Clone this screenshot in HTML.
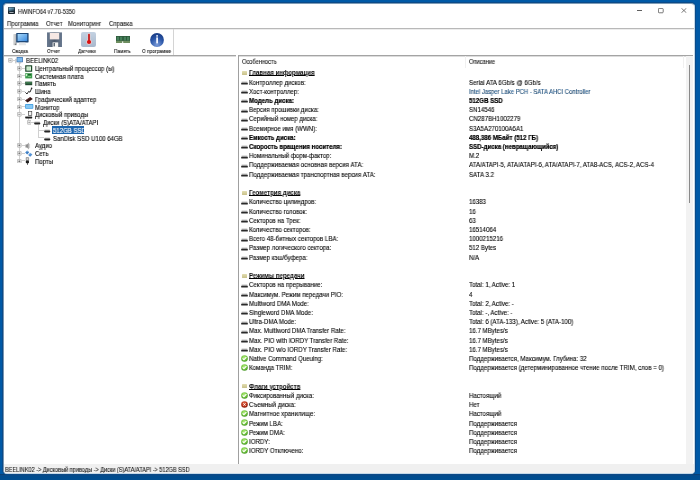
<!DOCTYPE html>
<html><head><meta charset="utf-8">
<style>
*{margin:0;padding:0;box-sizing:border-box}
html,body{width:700px;height:480px;overflow:hidden}
body{background:#0059a6;font-family:"Liberation Sans",sans-serif;color:#1a1a1a;position:relative}
.abs{position:absolute}
.t,.lr,.tr{will-change:transform}
.tr,.lr{-webkit-text-stroke:0.1px #000}
.t{-webkit-text-stroke:0.1px #111}
#shadow{position:absolute;left:2px;top:2px;width:694px;height:473px;border-radius:5px;background:#0b4a88}
#win{position:absolute;left:3px;top:3px;width:692px;height:471px;background:#fff;border:1px solid #c4d8e8;border-left-color:#7896b2;border-top-color:#7e9cb6;border-radius:4px;overflow:hidden}
.t{position:absolute;white-space:nowrap}
#title{left:14px;top:3.6px;font-size:6.3px;line-height:8px;color:#1a1a1a;transform:scaleX(.87);transform-origin:0 50%}
.menu{top:16.2px;font-size:6.9px;line-height:8px;color:#1a1a1a;transform:scaleX(.87);transform-origin:0 50%}
.tb{font-size:5.8px;line-height:8px;color:#1a1a1a;top:43.4px;transform:scaleX(.82);transform-origin:0 50%}
#tree{position:absolute;left:0;top:51px;width:231.5px;height:409px;border-top:1px solid #a4a4a4;box-shadow:inset 0 1px 0 #dcdcdc}
#list{position:absolute;left:234px;top:51px;width:455px;height:409px;border-top:1px solid #a4a4a4;border-left:1px solid #a0a0a0;box-shadow:inset 0 1px 0 #dcdcdc}
#status{position:absolute;left:0;top:460px;width:690px;height:9px;background:#f0f0f0}
.tr{position:absolute;height:7.73px;line-height:7.73px;font-size:6.7px;white-space:nowrap;color:#000;transform:scaleX(.9);transform-origin:0 50%}
.lr{position:absolute;height:9.2px;line-height:9.2px;font-size:6.8px;white-space:nowrap;color:#000;transform:scaleX(.9);transform-origin:0 50%}
.b{font-weight:bold;color:#000;-webkit-text-stroke:0.22px #000}
.hd{font-size:6.3px;line-height:8px;color:#222;transform:scaleX(.9);transform-origin:0 50%}
.sec{-webkit-text-stroke:0.03px #000;font-weight:bold;text-decoration:underline;text-underline-offset:0px;text-decoration-thickness:1px;color:#111}
.link{color:#1e5e98;transform:scaleX(.87)}
.ico-drv{width:6.5px;height:2.2px;background:#2a2a2a;border-top:1px solid #9a9a9a}
.exp{width:4.6px;height:4.6px;border:1px solid #c4c4c4;border-radius:1px;background:#fafafa}
.exp i{position:absolute;left:0.6px;top:1.3px;height:0;border-top:1px solid #555;width:1.6px}
.exp b{position:absolute;left:1.1px;top:0.6px;width:0;height:1.6px;border-left:1px solid #555}
.tl{background:#d0d0d0}
</style></head><body>
<div class="abs" style="left:0;top:474px;width:700px;height:6px;background:linear-gradient(#0b3a6a,#0a4886 1.2px,#004c8e 2.5px,#004d90)"></div>
<div id="shadow"></div>
<div id="win">
  <svg class="abs" style="left:4px;top:2.9px" width="7" height="7" viewBox="0 0 70 70"><defs><linearGradient id="ti" x1="0" y1="0" x2=".6" y2="1"><stop offset="0" stop-color="#9cc8dc"/><stop offset=".45" stop-color="#5a8aa4"/><stop offset="1" stop-color="#1e3444"/></linearGradient></defs><rect x="0" y="0" width="70" height="70" rx="8" fill="#16212a"/><rect x="6" y="6" width="58" height="40" rx="3" fill="url(#ti)"/><rect x="14" y="52" width="42" height="8" fill="#c8d0d6"/></svg>
  <div class="t" id="title">HWiNFO64 v7.70-5350</div>
  <div class="abs" style="left:633px;top:6.2px;width:4.8px;height:1px;background:#606060"></div>
  <svg class="abs" style="left:654.4px;top:4.4px" width="5.6" height="5.2" viewBox="0 0 56 52"><rect x="4" y="4" width="48" height="44" rx="8" fill="none" stroke="#555" stroke-width="8"/></svg>
  <svg class="abs" style="left:676.8px;top:4.4px" width="5.8" height="5" viewBox="0 0 58 50"><path d="M4 2L54 48M54 2L4 48" stroke="#4a4a4a" stroke-width="7"/></svg>
  <div class="t menu" style="left:3.2px">Программа</div>
  <div class="t menu" style="left:41.8px">Отчет</div>
  <div class="t menu" style="left:63.6px">Мониторинг</div>
  <div class="t menu" style="left:104.7px">Справка</div>
  <div class="abs" style="left:0;top:24px;width:692px;height:1px;background:#b8b8b8"></div><div class="abs" style="left:0;top:25px;width:692px;height:1px;background:#ececec"></div>
  <div class="abs" style="left:169px;top:25px;width:1px;height:26px;background:#d4d4d4"></div>
  <svg class="abs" style="left:9px;top:28.5px" width="16" height="13" viewBox="0 0 160 130"><defs><linearGradient id="scr" x1="0" y1="0" x2="1" y2="1"><stop offset="0" stop-color="#a8d8f8"/><stop offset="1" stop-color="#3a8ae0"/></linearGradient><linearGradient id="tw" x1="0" x2="1"><stop offset="0" stop-color="#e8e8e8"/><stop offset="1" stop-color="#a4a8ac"/></linearGradient></defs>
   <rect x="0" y="10" width="38" height="112" rx="4" fill="url(#tw)"/><rect x="18" y="108" width="12" height="8" fill="#555"/>
   <rect x="32" y="0" width="124" height="94" rx="6" fill="#1e4878"/><rect x="46" y="10" width="96" height="70" fill="url(#scr)"/>
   <path d="M64 94H124L132 122H56Z" fill="#e4e6e8"/></svg>
  <svg class="abs" style="left:43px;top:27.6px" width="15" height="15" viewBox="0 0 150 150"><defs><linearGradient id="fl" x1="0" x2="1"><stop offset="0" stop-color="#6a7a90"/><stop offset=".5" stop-color="#4a586c"/><stop offset="1" stop-color="#6a7a90"/></linearGradient></defs>
   <path d="M0 4H150V150H0Z" fill="url(#fl)"/><rect x="28" y="10" width="94" height="64" fill="#f6e8e4"/><rect x="56" y="104" width="56" height="46" fill="#f4f4f4"/><rect x="66" y="110" width="12" height="34" fill="#3a4656"/></svg>
  <div class="abs" style="left:77.2px;top:27.8px;width:14.8px;height:15.2px;border-radius:2px;background:linear-gradient(#c4d2e2,#a8b8cc)"></div>
  <svg class="abs" style="left:81.7px;top:29.2px" width="6" height="12" viewBox="0 0 60 120"><rect x="16" y="2" width="28" height="80" rx="14" fill="#f0d0d0"/><circle cx="30" cy="90" r="27" fill="#f0d0d0"/><rect x="21" y="8" width="18" height="76" rx="9" fill="#c41a1a"/><circle cx="30" cy="90" r="21" fill="#d81010"/></svg>
  <svg class="abs" style="left:112px;top:31.8px" width="14" height="7" viewBox="0 0 140 70"><rect x="0" y="0" width="140" height="70" fill="#2e5a3c"/><g fill="#46805a"><rect x="8" y="8" width="22" height="36"/><rect x="40" y="8" width="22" height="36"/><rect x="78" y="8" width="22" height="36"/><rect x="110" y="8" width="22" height="36"/></g><rect x="0" y="48" width="140" height="22" fill="#6e8e60"/><rect x="62" y="54" width="10" height="16" fill="#fff"/></svg>
  <svg class="abs" style="left:145.6px;top:28.8px" width="14" height="14" viewBox="0 0 140 140"><defs><radialGradient id="ig" cx=".5" cy=".85" r=".8"><stop offset="0" stop-color="#7a9ad8"/><stop offset=".6" stop-color="#2a56a8"/><stop offset="1" stop-color="#1a3e88"/></radialGradient></defs><circle cx="70" cy="70" r="69" fill="url(#ig)"/><rect x="62" y="22" width="18" height="14" fill="#f0f4ff"/><rect x="62" y="44" width="18" height="60" fill="#f0f4ff"/></svg>
  <div class="t tb" style="left:7.8px">Сводка</div>
  <div class="t tb" style="left:42.8px">Отчет</div>
  <div class="t tb" style="left:74.3px">Датчики</div>
  <div class="t tb" style="left:109.8px">Память</div>
  <div class="t tb" style="left:137.6px">О программе</div>
  <div id="tree"></div>
  <div id="list"></div>
  <div class="t hd" style="left:237.9px;top:54.3px">Особенность</div>
  <div class="t hd" style="left:465.1px;top:54.3px">Описание</div>
  <div class="abs" style="left:461px;top:52px;width:1px;height:12px;background:#f0f0f0"></div>
  <div class="abs" style="left:679px;top:52px;width:1px;height:12px;background:#f0f0f0"></div>
  <div class="abs" style="left:682px;top:52px;width:7px;height:408px;background:#f2f2f2"></div>
  <div class="abs" style="left:685px;top:60.5px;width:1px;height:138px;background:#8a8a8a"></div>
<div class="abs tl" style="left:15.00px;top:58.50px;width:1.00px;height:98.49px"></div>
<div class="abs tl" style="left:8.70px;top:56.00px;width:3.00px;height:1.00px"></div>
<div class="abs tl" style="left:17.50px;top:63.73px;width:3.00px;height:1.00px"></div>
<div class="abs tl" style="left:17.50px;top:71.46px;width:3.00px;height:1.00px"></div>
<div class="abs tl" style="left:17.50px;top:79.19px;width:3.00px;height:1.00px"></div>
<div class="abs tl" style="left:17.50px;top:86.92px;width:3.00px;height:1.00px"></div>
<div class="abs tl" style="left:17.50px;top:94.65px;width:3.00px;height:1.00px"></div>
<div class="abs tl" style="left:17.50px;top:102.38px;width:3.00px;height:1.00px"></div>
<div class="abs tl" style="left:17.50px;top:110.11px;width:3.00px;height:1.00px"></div>
<div class="abs tl" style="left:17.50px;top:141.03px;width:3.00px;height:1.00px"></div>
<div class="abs tl" style="left:17.50px;top:148.76px;width:3.00px;height:1.00px"></div>
<div class="abs tl" style="left:17.50px;top:156.49px;width:3.00px;height:1.00px"></div>
<div class="abs tl" style="left:24.30px;top:112.91px;width:1.00px;height:3.23px"></div>
<div class="abs tl" style="left:27.00px;top:117.84px;width:3.50px;height:1.00px"></div>
<div class="abs tl" style="left:34.30px;top:120.84px;width:1.00px;height:12.96px"></div>
<div class="abs tl" style="left:34.30px;top:125.57px;width:5.50px;height:1.00px"></div>
<div class="abs tl" style="left:34.30px;top:133.30px;width:5.50px;height:1.00px"></div>
<svg class="abs" style="left:4.10px;top:54.20px" width="4.6" height="4.6" viewBox="0 0 46 46"><rect x="4" y="4" width="38" height="38" rx="4" fill="#f4f4f4" stroke="#a8a8a8" stroke-width="7"/><path d="M13 23H33" stroke="#303030" stroke-width="5"/></svg>
<svg class="abs" style="left:11.20px;top:53.00px" width="9" height="8" viewBox="0 0 90 80"><rect x="0" y="18" width="16" height="46" fill="#c8ccd0"/><rect x="17" y="0" width="62" height="52" rx="4" fill="#2a5a9a"/><rect x="22" y="5" width="52" height="42" fill="#7ab8ec"/><rect x="35" y="52" width="26" height="12" fill="#b0b8c0"/></svg>
<div class="tr" style="left:21.50px;top:53.21px">BEELINK02</div>
<svg class="abs" style="left:13.10px;top:61.93px" width="4.6" height="4.6" viewBox="0 0 46 46"><rect x="4" y="4" width="38" height="38" rx="4" fill="#f4f4f4" stroke="#a8a8a8" stroke-width="7"/><path d="M13 23H33M23 13V33" stroke="#303030" stroke-width="5"/></svg>
<svg class="abs" style="left:20.50px;top:60.73px" width="8" height="7" viewBox="0 0 80 70"><rect x="2" y="2" width="70" height="66" rx="3" fill="#1e4a2a"/><rect x="14" y="14" width="46" height="42" fill="#e4f6e4"/><rect x="22" y="22" width="30" height="26" fill="#c4e8c4"/></svg>
<div class="tr" style="left:30.60px;top:60.94px">Центральный процессор (ы)</div>
<svg class="abs" style="left:13.10px;top:69.66px" width="4.6" height="4.6" viewBox="0 0 46 46"><rect x="4" y="4" width="38" height="38" rx="4" fill="#f4f4f4" stroke="#a8a8a8" stroke-width="7"/><path d="M13 23H33M23 13V33" stroke="#303030" stroke-width="5"/></svg>
<svg class="abs" style="left:20.50px;top:68.96px" width="8" height="6" viewBox="0 0 80 60"><rect x="2" y="2" width="70" height="52" fill="#3a9a4a"/><rect x="8" y="10" width="14" height="22" fill="#c8f0c8"/><rect x="30" y="10" width="30" height="12" fill="#1e5e2a"/><rect x="30" y="30" width="30" height="8" fill="#8ad08a"/></svg>
<div class="tr" style="left:30.60px;top:68.67px">Системная плата</div>
<svg class="abs" style="left:13.10px;top:77.39px" width="4.6" height="4.6" viewBox="0 0 46 46"><rect x="4" y="4" width="38" height="38" rx="4" fill="#f4f4f4" stroke="#a8a8a8" stroke-width="7"/><path d="M13 23H33M23 13V33" stroke="#303030" stroke-width="5"/></svg>
<svg class="abs" style="left:20.50px;top:77.19px" width="8" height="5" viewBox="0 0 80 50"><rect x="2" y="6" width="70" height="36" fill="#234a30"/><rect x="6" y="10" width="62" height="16" fill="#3e7a4e"/></svg>
<div class="tr" style="left:30.60px;top:76.40px">Память</div>
<svg class="abs" style="left:13.10px;top:85.12px" width="4.6" height="4.6" viewBox="0 0 46 46"><rect x="4" y="4" width="38" height="38" rx="4" fill="#f4f4f4" stroke="#a8a8a8" stroke-width="7"/><path d="M13 23H33M23 13V33" stroke="#303030" stroke-width="5"/></svg>
<svg class="abs" style="left:20.50px;top:83.42px" width="8" height="8" viewBox="0 0 80 80"><path d="M4 54L20 70L36 44L50 52L66 14" stroke="#2a2a2a" stroke-width="10" fill="none"/><circle cx="66" cy="14" r="8" fill="#2a2a2a"/></svg>
<div class="tr" style="left:30.60px;top:84.13px">Шина</div>
<svg class="abs" style="left:13.10px;top:92.85px" width="4.6" height="4.6" viewBox="0 0 46 46"><rect x="4" y="4" width="38" height="38" rx="4" fill="#f4f4f4" stroke="#a8a8a8" stroke-width="7"/><path d="M13 23H33M23 13V33" stroke="#303030" stroke-width="5"/></svg>
<svg class="abs" style="left:20.50px;top:91.65px" width="8" height="7" viewBox="0 0 80 70"><path d="M0 44L52 10L78 30L26 64Z" fill="#341414"/><path d="M10 44L52 17" stroke="#7a4444" stroke-width="6"/></svg>
<div class="tr" style="left:30.60px;top:91.86px">Графический адаптер</div>
<svg class="abs" style="left:13.10px;top:100.58px" width="4.6" height="4.6" viewBox="0 0 46 46"><rect x="4" y="4" width="38" height="38" rx="4" fill="#f4f4f4" stroke="#a8a8a8" stroke-width="7"/><path d="M13 23H33M23 13V33" stroke="#303030" stroke-width="5"/></svg>
<svg class="abs" style="left:20.50px;top:100.38px" width="9" height="5" viewBox="0 0 90 50"><rect x="1" y="1" width="82" height="46" rx="8" fill="#3a9ae0"/><rect x="8" y="7" width="68" height="34" rx="4" fill="#86c8f4"/></svg>
<div class="tr" style="left:30.60px;top:99.59px">Монитор</div>
<svg class="abs" style="left:13.10px;top:108.31px" width="4.6" height="4.6" viewBox="0 0 46 46"><rect x="4" y="4" width="38" height="38" rx="4" fill="#f4f4f4" stroke="#a8a8a8" stroke-width="7"/><path d="M13 23H33" stroke="#303030" stroke-width="5"/></svg>
<svg class="abs" style="left:20.50px;top:106.61px" width="8" height="8" viewBox="0 0 80 80"><rect x="34" y="6" width="34" height="40" fill="#f4f4f4" stroke="#333" stroke-width="6"/><rect x="2" y="54" width="70" height="20" rx="6" fill="#1e1e1e"/><rect x="4" y="50" width="66" height="6" fill="#aaa"/></svg>
<div class="tr" style="left:30.60px;top:107.32px">Дисковый приводы</div>
<svg class="abs" style="left:22.50px;top:116.04px" width="4.6" height="4.6" viewBox="0 0 46 46"><rect x="4" y="4" width="38" height="38" rx="4" fill="#f4f4f4" stroke="#a8a8a8" stroke-width="7"/><path d="M13 23H33" stroke="#303030" stroke-width="5"/></svg>
<svg class="abs" style="left:30.30px;top:117.24px" width="7" height="4" viewBox="0 0 70 40"><rect x="4" y="4" width="56" height="14" rx="5" fill="#c4c4c4"/><rect x="1" y="16" width="62" height="18" rx="8" fill="#262626"/></svg>
<div class="tr" style="left:39.40px;top:115.05px">Диски (S)ATA/ATAPI</div>
<svg class="abs" style="left:39.60px;top:124.97px" width="7" height="4" viewBox="0 0 70 40"><rect x="4" y="4" width="56" height="14" rx="5" fill="#c4c4c4"/><rect x="1" y="16" width="62" height="18" rx="8" fill="#262626"/></svg>
<div class="abs" style="left:48.4px;top:122.4px;width:31.3px;height:7.2px;background:#1e66ae"></div>
<div class="tr" style="left:49.20px;top:122.78px;color:#fff;-webkit-text-stroke-color:#fff">512GB SSD</div>
<svg class="abs" style="left:39.60px;top:132.70px" width="7" height="4" viewBox="0 0 70 40"><rect x="4" y="4" width="56" height="14" rx="5" fill="#c4c4c4"/><rect x="1" y="16" width="62" height="18" rx="8" fill="#262626"/></svg>
<div class="tr" style="left:49.20px;top:130.51px">SanDisk SSD U100 64GB</div>
<svg class="abs" style="left:13.10px;top:139.23px" width="4.6" height="4.6" viewBox="0 0 46 46"><rect x="4" y="4" width="38" height="38" rx="4" fill="#f4f4f4" stroke="#a8a8a8" stroke-width="7"/><path d="M13 23H33M23 13V33" stroke="#303030" stroke-width="5"/></svg>
<svg class="abs" style="left:20.50px;top:137.53px" width="6" height="8" viewBox="0 0 60 80"><path d="M4 24H20L38 4V76L20 56H4Z" fill="#9a9a9a"/><path d="M20 24V56" stroke="#666" stroke-width="4"/><path d="M46 18V62" stroke="#b0b0b0" stroke-width="6"/></svg>
<div class="tr" style="left:30.60px;top:138.24px">Аудио</div>
<svg class="abs" style="left:13.10px;top:146.96px" width="4.6" height="4.6" viewBox="0 0 46 46"><rect x="4" y="4" width="38" height="38" rx="4" fill="#f4f4f4" stroke="#a8a8a8" stroke-width="7"/><path d="M13 23H33M23 13V33" stroke="#303030" stroke-width="5"/></svg>
<svg class="abs" style="left:20.50px;top:145.76px" width="8" height="7" viewBox="0 0 80 70"><path d="M2 26L22 4L42 22L22 44Z" fill="#3a7cc4"/><path d="M32 50L52 28L74 46L52 68Z" fill="#4a8ad0"/><path d="M10 24L22 12L32 22" stroke="#a8d0f0" stroke-width="5" fill="none"/><path d="M40 48L52 36L64 46" stroke="#a8d0f0" stroke-width="5" fill="none"/></svg>
<div class="tr" style="left:30.60px;top:145.97px">Сеть</div>
<svg class="abs" style="left:13.10px;top:154.69px" width="4.6" height="4.6" viewBox="0 0 46 46"><rect x="4" y="4" width="38" height="38" rx="4" fill="#f4f4f4" stroke="#a8a8a8" stroke-width="7"/><path d="M13 23H33M23 13V33" stroke="#303030" stroke-width="5"/></svg>
<svg class="abs" style="left:20.50px;top:152.99px" width="5" height="8" viewBox="0 0 50 80"><rect x="12" y="4" width="24" height="34" rx="3" fill="#d0d0d0" stroke="#333" stroke-width="4"/><rect x="8" y="36" width="32" height="26" rx="8" fill="#1e1e1e"/><rect x="20" y="60" width="8" height="18" fill="#333"/></svg>
<div class="tr" style="left:30.60px;top:153.70px">Порты</div>
<div class="abs" style="left:238px;top:67px;width:5px;height:4px;background:linear-gradient(#e2ddb0,#c8c18a);border-radius:0.6px"></div>
<div class="lr sec" style="left:244.80px;top:64.34px">Главная информация</div>
<svg class="abs" style="left:237.30px;top:76.92px" width="7" height="4" viewBox="0 0 70 40"><rect x="4" y="4" width="62" height="16" rx="6" fill="#c4c4c4"/><rect x="1" y="17" width="68" height="19" rx="9" fill="#2a2a2a"/></svg>
<div class="lr" style="left:244.80px;top:73.55px">Контроллер дисков:</div>
<div class="lr" style="left:464.60px;top:73.55px">Serial ATA 6Gb/s @ 6Gb/s</div>
<svg class="abs" style="left:237.30px;top:86.13px" width="7" height="4" viewBox="0 0 70 40"><rect x="4" y="4" width="62" height="16" rx="6" fill="#c4c4c4"/><rect x="1" y="17" width="68" height="19" rx="9" fill="#2a2a2a"/></svg>
<div class="lr" style="left:244.80px;top:82.77px">Хост-контроллер:</div>
<div class="lr link" style="left:464.60px;top:82.77px">Intel Jasper Lake PCH - SATA AHCI Controller</div>
<svg class="abs" style="left:237.30px;top:95.34px" width="7" height="4" viewBox="0 0 70 40"><rect x="4" y="4" width="62" height="16" rx="6" fill="#c4c4c4"/><rect x="1" y="17" width="68" height="19" rx="9" fill="#2a2a2a"/></svg>
<div class="lr b" style="left:244.80px;top:91.98px">Модель диска:</div>
<div class="lr b" style="left:464.60px;top:91.98px">512GB SSD</div>
<svg class="abs" style="left:237.30px;top:104.56px" width="7" height="4" viewBox="0 0 70 40"><rect x="4" y="4" width="62" height="16" rx="6" fill="#c4c4c4"/><rect x="1" y="17" width="68" height="19" rx="9" fill="#2a2a2a"/></svg>
<div class="lr" style="left:244.80px;top:101.20px">Версия прошивки диска:</div>
<div class="lr" style="left:464.60px;top:101.20px">SN14546</div>
<svg class="abs" style="left:237.30px;top:113.78px" width="7" height="4" viewBox="0 0 70 40"><rect x="4" y="4" width="62" height="16" rx="6" fill="#c4c4c4"/><rect x="1" y="17" width="68" height="19" rx="9" fill="#2a2a2a"/></svg>
<div class="lr" style="left:244.80px;top:110.41px">Серийный номер диска:</div>
<div class="lr" style="left:464.60px;top:110.41px">CN287BH1002279</div>
<svg class="abs" style="left:237.30px;top:122.99px" width="7" height="4" viewBox="0 0 70 40"><rect x="4" y="4" width="62" height="16" rx="6" fill="#c4c4c4"/><rect x="1" y="17" width="68" height="19" rx="9" fill="#2a2a2a"/></svg>
<div class="lr" style="left:244.80px;top:119.63px">Всемирное имя (WWN):</div>
<div class="lr" style="left:464.60px;top:119.63px">S3A5A270100A6A1</div>
<svg class="abs" style="left:237.30px;top:132.21px" width="7" height="4" viewBox="0 0 70 40"><rect x="4" y="4" width="62" height="16" rx="6" fill="#c4c4c4"/><rect x="1" y="17" width="68" height="19" rx="9" fill="#2a2a2a"/></svg>
<div class="lr b" style="left:244.80px;top:128.84px">Емкость диска:</div>
<div class="lr b" style="left:464.60px;top:128.84px">488,386 МБайт (512 ГБ)</div>
<svg class="abs" style="left:237.30px;top:141.42px" width="7" height="4" viewBox="0 0 70 40"><rect x="4" y="4" width="62" height="16" rx="6" fill="#c4c4c4"/><rect x="1" y="17" width="68" height="19" rx="9" fill="#2a2a2a"/></svg>
<div class="lr b" style="left:244.80px;top:138.06px">Скорость вращения носителя:</div>
<div class="lr b" style="left:464.60px;top:138.06px">SSD-диска (невращающийся)</div>
<svg class="abs" style="left:237.30px;top:150.64px" width="7" height="4" viewBox="0 0 70 40"><rect x="4" y="4" width="62" height="16" rx="6" fill="#c4c4c4"/><rect x="1" y="17" width="68" height="19" rx="9" fill="#2a2a2a"/></svg>
<div class="lr" style="left:244.80px;top:147.27px">Номинальный форм-фактор:</div>
<div class="lr" style="left:464.60px;top:147.27px">M.2</div>
<svg class="abs" style="left:237.30px;top:159.85px" width="7" height="4" viewBox="0 0 70 40"><rect x="4" y="4" width="62" height="16" rx="6" fill="#c4c4c4"/><rect x="1" y="17" width="68" height="19" rx="9" fill="#2a2a2a"/></svg>
<div class="lr" style="left:244.80px;top:156.49px">Поддерживаемая основная версия ATA:</div>
<div class="lr" style="left:464.60px;top:156.49px">ATA/ATAPI-5, ATA/ATAPI-6, ATA/ATAPI-7, ATA8-ACS, ACS-2, ACS-4</div>
<svg class="abs" style="left:237.30px;top:169.06px" width="7" height="4" viewBox="0 0 70 40"><rect x="4" y="4" width="62" height="16" rx="6" fill="#c4c4c4"/><rect x="1" y="17" width="68" height="19" rx="9" fill="#2a2a2a"/></svg>
<div class="lr" style="left:244.80px;top:165.70px">Поддерживаемая транспортная версия ATA:</div>
<div class="lr" style="left:464.60px;top:165.70px">SATA 3.2</div>
<div class="abs" style="left:238px;top:187px;width:5px;height:4px;background:linear-gradient(#e2ddb0,#c8c18a);border-radius:0.6px"></div>
<div class="lr sec" style="left:244.80px;top:184.13px">Геометрия диска</div>
<svg class="abs" style="left:237.30px;top:196.71px" width="7" height="4" viewBox="0 0 70 40"><rect x="4" y="4" width="62" height="16" rx="6" fill="#c4c4c4"/><rect x="1" y="17" width="68" height="19" rx="9" fill="#2a2a2a"/></svg>
<div class="lr" style="left:244.80px;top:193.35px">Количество цилиндров:</div>
<div class="lr" style="left:464.60px;top:193.35px">16383</div>
<svg class="abs" style="left:237.30px;top:205.92px" width="7" height="4" viewBox="0 0 70 40"><rect x="4" y="4" width="62" height="16" rx="6" fill="#c4c4c4"/><rect x="1" y="17" width="68" height="19" rx="9" fill="#2a2a2a"/></svg>
<div class="lr" style="left:244.80px;top:202.56px">Количество головок:</div>
<div class="lr" style="left:464.60px;top:202.56px">16</div>
<svg class="abs" style="left:237.30px;top:215.14px" width="7" height="4" viewBox="0 0 70 40"><rect x="4" y="4" width="62" height="16" rx="6" fill="#c4c4c4"/><rect x="1" y="17" width="68" height="19" rx="9" fill="#2a2a2a"/></svg>
<div class="lr" style="left:244.80px;top:211.78px">Секторов на Трек:</div>
<div class="lr" style="left:464.60px;top:211.78px">63</div>
<svg class="abs" style="left:237.30px;top:224.35px" width="7" height="4" viewBox="0 0 70 40"><rect x="4" y="4" width="62" height="16" rx="6" fill="#c4c4c4"/><rect x="1" y="17" width="68" height="19" rx="9" fill="#2a2a2a"/></svg>
<div class="lr" style="left:244.80px;top:220.99px">Количество секторов:</div>
<div class="lr" style="left:464.60px;top:220.99px">16514064</div>
<svg class="abs" style="left:237.30px;top:233.57px" width="7" height="4" viewBox="0 0 70 40"><rect x="4" y="4" width="62" height="16" rx="6" fill="#c4c4c4"/><rect x="1" y="17" width="68" height="19" rx="9" fill="#2a2a2a"/></svg>
<div class="lr" style="left:244.80px;top:230.21px">Всего 48-битных секторов LBA:</div>
<div class="lr" style="left:464.60px;top:230.21px">1000215216</div>
<svg class="abs" style="left:237.30px;top:242.78px" width="7" height="4" viewBox="0 0 70 40"><rect x="4" y="4" width="62" height="16" rx="6" fill="#c4c4c4"/><rect x="1" y="17" width="68" height="19" rx="9" fill="#2a2a2a"/></svg>
<div class="lr" style="left:244.80px;top:239.42px">Размер логического сектора:</div>
<div class="lr" style="left:464.60px;top:239.42px">512 Bytes</div>
<svg class="abs" style="left:237.30px;top:252.00px" width="7" height="4" viewBox="0 0 70 40"><rect x="4" y="4" width="62" height="16" rx="6" fill="#c4c4c4"/><rect x="1" y="17" width="68" height="19" rx="9" fill="#2a2a2a"/></svg>
<div class="lr" style="left:244.80px;top:248.64px">Размер кэш/буфера:</div>
<div class="lr" style="left:464.60px;top:248.64px">N/A</div>
<div class="abs" style="left:238px;top:270px;width:5px;height:4px;background:linear-gradient(#e2ddb0,#c8c18a);border-radius:0.6px"></div>
<div class="lr sec" style="left:244.80px;top:267.07px">Режимы передачи</div>
<svg class="abs" style="left:237.30px;top:279.64px" width="7" height="4" viewBox="0 0 70 40"><rect x="4" y="4" width="62" height="16" rx="6" fill="#c4c4c4"/><rect x="1" y="17" width="68" height="19" rx="9" fill="#2a2a2a"/></svg>
<div class="lr" style="left:244.80px;top:276.28px">Секторов на прерывание:</div>
<div class="lr" style="left:464.60px;top:276.28px">Total: 1, Active: 1</div>
<svg class="abs" style="left:237.30px;top:288.86px" width="7" height="4" viewBox="0 0 70 40"><rect x="4" y="4" width="62" height="16" rx="6" fill="#c4c4c4"/><rect x="1" y="17" width="68" height="19" rx="9" fill="#2a2a2a"/></svg>
<div class="lr" style="left:244.80px;top:285.50px">Максимум. Режим передачи PIO:</div>
<div class="lr" style="left:464.60px;top:285.50px">4</div>
<svg class="abs" style="left:237.30px;top:298.07px" width="7" height="4" viewBox="0 0 70 40"><rect x="4" y="4" width="62" height="16" rx="6" fill="#c4c4c4"/><rect x="1" y="17" width="68" height="19" rx="9" fill="#2a2a2a"/></svg>
<div class="lr" style="left:244.80px;top:294.71px">Multiword DMA Mode:</div>
<div class="lr" style="left:464.60px;top:294.71px">Total: 2, Active: -</div>
<svg class="abs" style="left:237.30px;top:307.29px" width="7" height="4" viewBox="0 0 70 40"><rect x="4" y="4" width="62" height="16" rx="6" fill="#c4c4c4"/><rect x="1" y="17" width="68" height="19" rx="9" fill="#2a2a2a"/></svg>
<div class="lr" style="left:244.80px;top:303.93px">Singleword DMA Mode:</div>
<div class="lr" style="left:464.60px;top:303.93px">Total: -, Active: -</div>
<svg class="abs" style="left:237.30px;top:316.50px" width="7" height="4" viewBox="0 0 70 40"><rect x="4" y="4" width="62" height="16" rx="6" fill="#c4c4c4"/><rect x="1" y="17" width="68" height="19" rx="9" fill="#2a2a2a"/></svg>
<div class="lr" style="left:244.80px;top:313.14px">Ultra-DMA Mode:</div>
<div class="lr" style="left:464.60px;top:313.14px">Total: 6 (ATA-133), Active: 5 (ATA-100)</div>
<svg class="abs" style="left:237.30px;top:325.72px" width="7" height="4" viewBox="0 0 70 40"><rect x="4" y="4" width="62" height="16" rx="6" fill="#c4c4c4"/><rect x="1" y="17" width="68" height="19" rx="9" fill="#2a2a2a"/></svg>
<div class="lr" style="left:244.80px;top:322.36px">Max. Multiword DMA Transfer Rate:</div>
<div class="lr" style="left:464.60px;top:322.36px">16.7 MBytes/s</div>
<svg class="abs" style="left:237.30px;top:334.94px" width="7" height="4" viewBox="0 0 70 40"><rect x="4" y="4" width="62" height="16" rx="6" fill="#c4c4c4"/><rect x="1" y="17" width="68" height="19" rx="9" fill="#2a2a2a"/></svg>
<div class="lr" style="left:244.80px;top:331.57px">Max. PIO with IORDY Transfer Rate:</div>
<div class="lr" style="left:464.60px;top:331.57px">16.7 MBytes/s</div>
<svg class="abs" style="left:237.30px;top:344.15px" width="7" height="4" viewBox="0 0 70 40"><rect x="4" y="4" width="62" height="16" rx="6" fill="#c4c4c4"/><rect x="1" y="17" width="68" height="19" rx="9" fill="#2a2a2a"/></svg>
<div class="lr" style="left:244.80px;top:340.79px">Max. PIO w/o IORDY Transfer Rate:</div>
<div class="lr" style="left:464.60px;top:340.79px">16.7 MBytes/s</div>
<svg class="abs" style="left:237.00px;top:350.87px" width="7" height="7" viewBox="0 0 70 70"><defs><radialGradient id="gk" cx=".45" cy=".35" r=".7"><stop offset="0" stop-color="#b8f080"/><stop offset=".6" stop-color="#6cc03a"/><stop offset="1" stop-color="#3a8a1e"/></radialGradient></defs><circle cx="35" cy="35" r="33" fill="url(#gk)"/><path d="M16 34L30 47L54 22" stroke="#fff" stroke-width="12" fill="none" stroke-linejoin="round"/></svg>
<div class="lr" style="left:244.80px;top:350.00px">Native Command Queuing:</div>
<div class="lr" style="left:464.60px;top:350.00px">Поддерживается, Максимум. Глубина: 32</div>
<svg class="abs" style="left:237.00px;top:360.08px" width="7" height="7" viewBox="0 0 70 70"><defs><radialGradient id="gk" cx=".45" cy=".35" r=".7"><stop offset="0" stop-color="#b8f080"/><stop offset=".6" stop-color="#6cc03a"/><stop offset="1" stop-color="#3a8a1e"/></radialGradient></defs><circle cx="35" cy="35" r="33" fill="url(#gk)"/><path d="M16 34L30 47L54 22" stroke="#fff" stroke-width="12" fill="none" stroke-linejoin="round"/></svg>
<div class="lr" style="left:244.80px;top:359.22px">Команда TRIM:</div>
<div class="lr" style="left:464.60px;top:359.22px">Поддерживается (детерминированное чтение после TRIM, слов = 0)</div>
<div class="abs" style="left:238px;top:380px;width:5px;height:4px;background:linear-gradient(#e2ddb0,#c8c18a);border-radius:0.6px"></div>
<div class="lr sec" style="left:244.80px;top:377.65px">Флаги устройств</div>
<svg class="abs" style="left:237.00px;top:387.72px" width="7" height="7" viewBox="0 0 70 70"><defs><radialGradient id="gk" cx=".45" cy=".35" r=".7"><stop offset="0" stop-color="#b8f080"/><stop offset=".6" stop-color="#6cc03a"/><stop offset="1" stop-color="#3a8a1e"/></radialGradient></defs><circle cx="35" cy="35" r="33" fill="url(#gk)"/><path d="M16 34L30 47L54 22" stroke="#fff" stroke-width="12" fill="none" stroke-linejoin="round"/></svg>
<div class="lr" style="left:244.80px;top:386.86px">Фиксированный диска:</div>
<div class="lr" style="left:464.60px;top:386.86px">Настоящий</div>
<svg class="abs" style="left:237.00px;top:396.94px" width="7" height="7" viewBox="0 0 70 70"><defs><radialGradient id="gn" cx=".45" cy=".35" r=".7"><stop offset="0" stop-color="#e87050"/><stop offset=".6" stop-color="#b83018"/><stop offset="1" stop-color="#7a1a0c"/></radialGradient></defs><circle cx="35" cy="35" r="33" fill="url(#gn)"/><path d="M24 23L46 47M46 23L24 47" stroke="#fff" stroke-width="9" fill="none"/></svg>
<div class="lr" style="left:244.80px;top:396.08px">Съемный диска:</div>
<div class="lr" style="left:464.60px;top:396.08px">Нет</div>
<svg class="abs" style="left:237.00px;top:406.15px" width="7" height="7" viewBox="0 0 70 70"><defs><radialGradient id="gk" cx=".45" cy=".35" r=".7"><stop offset="0" stop-color="#b8f080"/><stop offset=".6" stop-color="#6cc03a"/><stop offset="1" stop-color="#3a8a1e"/></radialGradient></defs><circle cx="35" cy="35" r="33" fill="url(#gk)"/><path d="M16 34L30 47L54 22" stroke="#fff" stroke-width="12" fill="none" stroke-linejoin="round"/></svg>
<div class="lr" style="left:244.80px;top:405.29px">Магнитное хранилище:</div>
<div class="lr" style="left:464.60px;top:405.29px">Настоящий</div>
<svg class="abs" style="left:237.00px;top:415.37px" width="7" height="7" viewBox="0 0 70 70"><defs><radialGradient id="gk" cx=".45" cy=".35" r=".7"><stop offset="0" stop-color="#b8f080"/><stop offset=".6" stop-color="#6cc03a"/><stop offset="1" stop-color="#3a8a1e"/></radialGradient></defs><circle cx="35" cy="35" r="33" fill="url(#gk)"/><path d="M16 34L30 47L54 22" stroke="#fff" stroke-width="12" fill="none" stroke-linejoin="round"/></svg>
<div class="lr" style="left:244.80px;top:414.51px">Режим LBA:</div>
<div class="lr" style="left:464.60px;top:414.51px">Поддерживается</div>
<svg class="abs" style="left:237.00px;top:424.58px" width="7" height="7" viewBox="0 0 70 70"><defs><radialGradient id="gk" cx=".45" cy=".35" r=".7"><stop offset="0" stop-color="#b8f080"/><stop offset=".6" stop-color="#6cc03a"/><stop offset="1" stop-color="#3a8a1e"/></radialGradient></defs><circle cx="35" cy="35" r="33" fill="url(#gk)"/><path d="M16 34L30 47L54 22" stroke="#fff" stroke-width="12" fill="none" stroke-linejoin="round"/></svg>
<div class="lr" style="left:244.80px;top:423.72px">Режим DMA:</div>
<div class="lr" style="left:464.60px;top:423.72px">Поддерживается</div>
<svg class="abs" style="left:237.00px;top:433.80px" width="7" height="7" viewBox="0 0 70 70"><defs><radialGradient id="gk" cx=".45" cy=".35" r=".7"><stop offset="0" stop-color="#b8f080"/><stop offset=".6" stop-color="#6cc03a"/><stop offset="1" stop-color="#3a8a1e"/></radialGradient></defs><circle cx="35" cy="35" r="33" fill="url(#gk)"/><path d="M16 34L30 47L54 22" stroke="#fff" stroke-width="12" fill="none" stroke-linejoin="round"/></svg>
<div class="lr" style="left:244.80px;top:432.94px">IORDY:</div>
<div class="lr" style="left:464.60px;top:432.94px">Поддерживается</div>
<svg class="abs" style="left:237.00px;top:443.01px" width="7" height="7" viewBox="0 0 70 70"><defs><radialGradient id="gk" cx=".45" cy=".35" r=".7"><stop offset="0" stop-color="#b8f080"/><stop offset=".6" stop-color="#6cc03a"/><stop offset="1" stop-color="#3a8a1e"/></radialGradient></defs><circle cx="35" cy="35" r="33" fill="url(#gk)"/><path d="M16 34L30 47L54 22" stroke="#fff" stroke-width="12" fill="none" stroke-linejoin="round"/></svg>
<div class="lr" style="left:244.80px;top:442.15px">IORDY Отключено:</div>
<div class="lr" style="left:464.60px;top:442.15px">Поддерживается</div>
  <div id="status"><div class="t" style="left:1.2px;top:1.8px;font-size:6.4px;line-height:8px;color:#1a1a1a;transform:scaleX(.87);transform-origin:0 50%">BEELINK02 -&gt; Дисковый приводы -&gt; Диски (S)ATA/ATAPI -&gt; 512GB SSD</div></div>
</div>
</body></html>
